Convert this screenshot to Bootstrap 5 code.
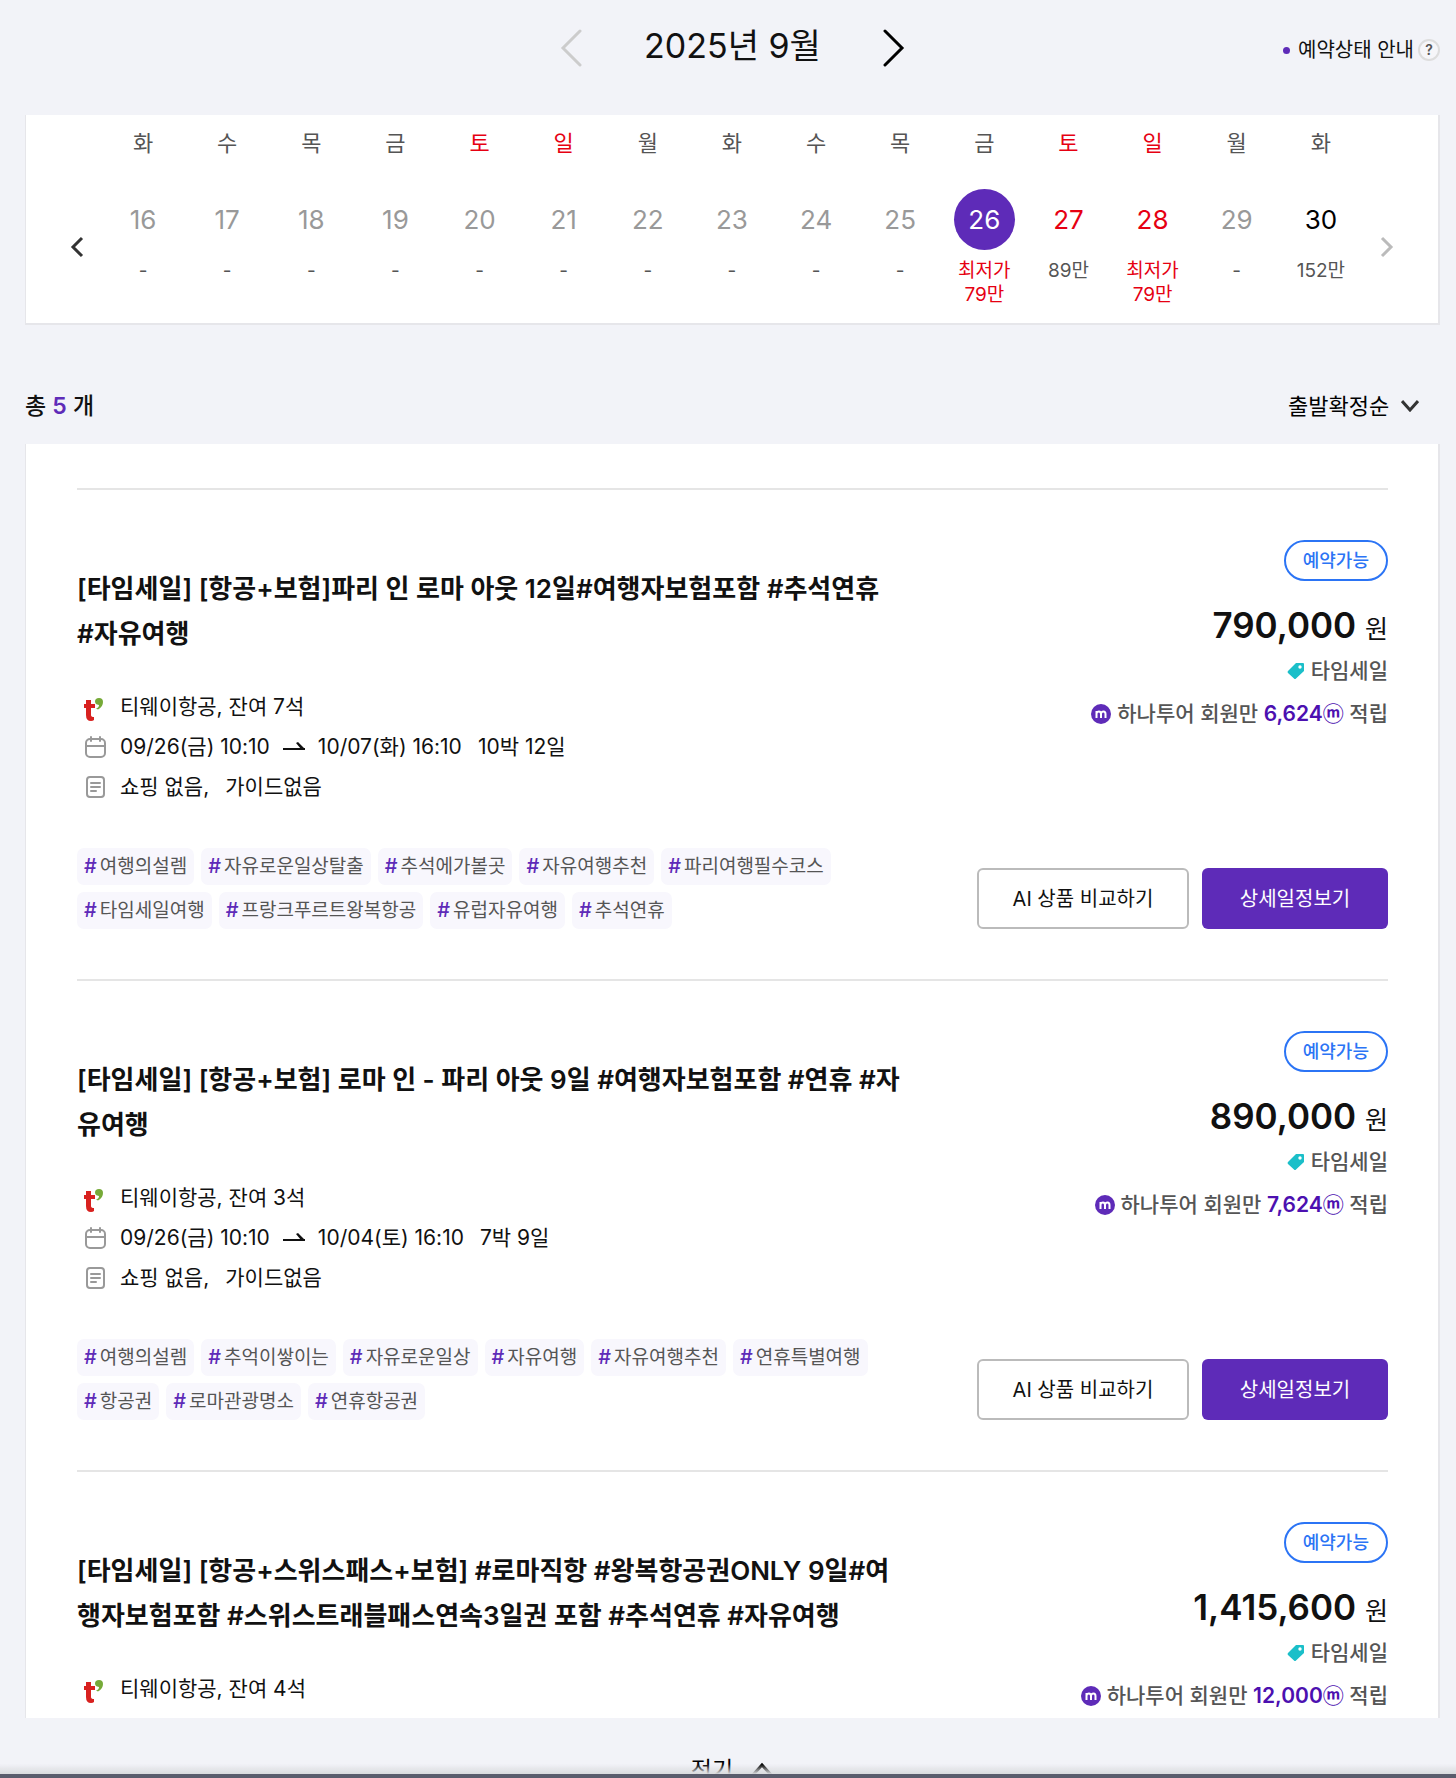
<!DOCTYPE html>
<html lang="ko">
<head>
<meta charset="utf-8">
<meta name="viewport" content="width=device-width, initial-scale=1">
<title>2025년 9월 여행 상품</title>
<link href="https://cdn.jsdelivr.net/npm/bootstrap@5.3.0/dist/css/bootstrap.min.css" rel="stylesheet">
<style>
  :root { --brand: #5e2bb8; --ink: #111; --muted: #555; --soft: #999; --sale: #e60012; --rule: #e5e5e5; }
  body { background: #f2f3f8; color: var(--ink); font-family: Inter, "Noto Sans CJK KR", sans-serif; font-size: 21px; line-height: 40px; height: 100vh; overflow: hidden; }
  .page-wrap { padding: 0 16px 0 25px; }
  .icon-btn { background: none; border: 0; padding: 0; line-height: 0; color: inherit; }
  .month-bar { height: 115px; padding-bottom: 19px; }
  .month-side { flex: 1 1 0; }
  .month-title { font-size: 34px; font-weight: 400; line-height: 48px; margin: 0 62px; padding-bottom: 4px; }
  .status-note { font-size: 20px; line-height: 24px; padding-top: 4px; }
  .dot { width: 7px; height: 7px; border-radius: 50%; background: var(--brand); }
  .help-btn { width: 22px; height: 22px; border: 2px solid #ddd; border-radius: 50%; background: #f6f6f9; color: var(--muted); font-size: 14px; font-weight: 600; line-height: 18px; padding: 0; }
  .panel { background: #fff; border: solid #e6e6ea; border-width: 0 2px 0 1px; }
  .cal { border-bottom-width: 2px; padding: 12px 44px 14px; }
  .cal table { table-layout: fixed; width: 100%; margin: 0; text-align: center; }
  .cal th { font-weight: 400; font-size: 22px; line-height: 32px; padding: 0; color: var(--muted); }
  .cal td { padding: 30px 0 0; vertical-align: top; height: 150px; font-size: 19px; line-height: 24px; color: var(--muted); }
  .day-num { display: block; width: 61px; height: 61px; margin: 0 auto 9px; border: 0; border-radius: 50%; background: none; padding: 0; font-size: 26px; line-height: 61px; color: var(--soft); }
  .cal .hot, .cal .hot .day-num, .cal .rest .day-num { color: var(--sale); }
  .cal .open .day-num { color: #000; }
  .cal .picked .day-num { background: var(--brand); color: #fff; }
  .cal-arrow { flex: 0 0 31px; padding-top: 58px; }
  .list-head { height: 119px; padding: 62px 21px 0 0; }
  .total { font-size: 23px; font-weight: 500; line-height: 38px; margin: 0; }
  .total b { color: var(--brand); font-weight: 600; }
  .sort-box { appearance: none; border: 0; background: transparent; font: inherit; font-size: 22px; line-height: 38px; padding: 0; color: #000; width: 102px; }
  .sort-label { gap: 11px; }
  .results { padding: 44px 50px 0 51px; max-height: 1274px; overflow: hidden; }
  .trip { border-top: 2px solid var(--rule); padding: 50px 0; gap: 60px; min-height: 490px; }
  .trip-main { flex: 0 1 835px; padding-top: 26px; }
  .trip-title { font-size: 26px; font-weight: 600; line-height: 45px; margin: 0 0 31px; min-height: 90px; word-break: break-all; }
  .info { margin: 0 0 41px; }
  .info li { display: flex; align-items: center; height: 40px; }
  .info .lead-icon { width: 22px; height: 28px; margin: 0 14px 0 7px; }
  .tag { background: #f8f7fd; color: var(--muted); border-radius: 7px; font-size: 19px; line-height: 37px; padding: 0 7px; text-decoration: none; }
  .tag b { color: var(--brand); font-size: 20px; font-weight: 500; margin-right: 3px; }
  .tags { gap: 7px; }
  .trip-side { flex: 0 0 auto; }
  .state { border: 2px solid #2b74f5; border-radius: 21px; color: #2b74f5; font-size: 18px; font-weight: 500; line-height: 37px; padding: 0 17px; }
  .price { font-size: 35px; font-weight: 600; line-height: 50px; height: 49px; margin-top: 19px; }
  .price small { font-size: 25px; font-weight: 400; }
  .perk { font-size: 21px; line-height: 43px; font-weight: 500; color: var(--muted); gap: 6px; }
  .perk b { color: #4c10b0; font-weight: 600; }
  .side-actions { gap: 13px; }
  .btn-trip { height: 61px; font-size: 20px; border-radius: 6px; padding: 0; }
  .btn-compare { width: 212px; border: 2px solid #bbb; background: #fff; color: var(--ink); }
  .btn-detail { width: 186px; background: var(--brand); color: #fff; }
  .fold { height: 100px; padding-top: 32px; font-size: 23px; line-height: 40px; gap: 17px; background: none; border: 0; color: #000; }
  .edge { height: 14px; background: linear-gradient(#f2f3f800, #d9dadd 10px, #5a5c6c 10px); }
</style>
</head>
<body>
<svg class="d-none" aria-hidden="true">
  <symbol id="tway" viewBox="0 0 22 28"><path d="M2 7h5v4h4v4H7v7q0 2 3 2v3q-1 1-3 1-5 0-5-6v-7H0v-4h2z" fill="#d8211f"/><path d="M12 15.500q3-1 3-3.500-4-.5-4-3.500 0-3.500 4-3.500t4 4q0 5-5 7.500z" fill="#76aa38"/></symbol>
  <symbol id="cal" viewBox="0 0 22 24"><g fill="none" stroke="#999" stroke-width="2" stroke-linecap="round"><rect x="2" y="4" width="19" height="18" rx="4"/><path d="M2 11h19M7 2v4M16 2v4"/></g></symbol>
  <symbol id="doc" viewBox="0 0 22 24"><g fill="none" stroke="#999" stroke-width="2" stroke-linecap="round"><rect x="3" y="2" width="17" height="20" rx="3"/><path d="M7 8h9M7 12h9M7 16h5"/></g></symbol>
  <symbol id="arrow" viewBox="0 0 24 16"><path d="M1 9h22v2H1zM14 4l2-1 7 7h-4z" fill="#111"/></symbol>
  <symbol id="tag" viewBox="0 0 18 18"><path d="M9 1H16q1 0 1 1v7L9 16.500q-1 1-2 0L1 11q-1-1 0-2z" fill="#1bbfc9"/><circle cx="13" cy="5" r="1.700" fill="#fff"/></symbol>
  <symbol id="mile" viewBox="0 0 20 20"><circle cx="10" cy="10" r="10" fill="#5e2bb8"/><path d="M5.500 14V7M5.500 9.500Q6 7.500 8 7.500t2 2.500v4M10 9.500q.5-2 2.500-2t2 2.500v4" fill="none" stroke="#fff" stroke-width="2"/></symbol>
</svg>
<main class="page-wrap">
  <header class="month-bar d-flex align-items-center">
    <div class="month-side"></div>
    <button class="icon-btn" aria-label="이전 달"><svg width="22" height="38" viewBox="0 0 22 38" fill="none" stroke="#ccc" stroke-width="3" stroke-linecap="round"><path d="M20 2 3 19l17 17"/></svg></button>
    <h1 class="month-title">2025년 9월</h1>
    <button class="icon-btn" aria-label="다음 달"><svg width="22" height="38" viewBox="0 0 22 38" fill="none" stroke="#000" stroke-width="3" stroke-linecap="round"><path d="m2 2 17 17L2 36"/></svg></button>
    <div class="month-side status-note d-flex justify-content-end align-items-center"><span class="dot me-2"></span>예약상태 안내<button class="help-btn ms-1" aria-label="도움말">?</button></div>
  </header>

  <section class="panel cal d-flex align-items-center">
    <button class="icon-btn cal-arrow text-start" aria-label="이전 날짜"><svg width="14" height="22" viewBox="0 0 14 22" fill="none" stroke="#333" stroke-width="3"><path d="m12 2-9 9 9 9"/></svg></button>
    <table>
      <thead><tr id="week"></tr></thead>
      <tbody><tr id="days"></tr></tbody>
    </table>
    <button class="icon-btn cal-arrow text-end" aria-label="다음 날짜"><svg width="14" height="22" viewBox="0 0 14 22" fill="none" stroke="#bbb" stroke-width="3"><path d="m2 2 9 9-9 9"/></svg></button>
  </section>

  <div class="list-head d-flex justify-content-between align-items-start">
    <h2 class="total">총 <b>5</b> 개</h2>
    <label class="sort-label d-flex align-items-center"><select class="sort-box" aria-label="정렬"><option>출발확정순</option></select><svg width="18" height="12" viewBox="0 0 18 12" fill="none" stroke="#333" stroke-width="3"><path d="m1 1 8 9 8-9"/></svg></label>
  </div>

  <section class="panel results" id="results"></section>
  <button class="fold w-100 d-flex justify-content-center align-items-start">전기<svg class="mt-2" width="24" height="22" viewBox="0 0 24 22" fill="none" stroke="#000" stroke-width="3"><path d="m2 18 10-11 10 11"/></svg></button>
</main>
<div class="edge fixed-bottom"></div>

<script>
  const names = ['일', '월', '화', '수', '목', '금', '토'];
  const fares = { 26: '최저가<br>79만', 27: '89만', 28: '최저가<br>79만', 30: '152만' };
  const kinds = { 26: 'picked', 27: 'rest', 28: 'rest', 30: 'open' };
  let week = '', days = '';
  for (let d = 16; d <= 30; d++) {
    const w = (d - 14) % 7;
    const low = d === 26 || d === 28;
    week += `<th scope="col" class="${w === 0 || w === 6 ? 'hot' : ''}">${names[w]}</th>`;
    days += `<td class="${kinds[d] || ''}"><button class="day-num">${d}</button><span class="${low ? 'hot' : ''}">${fares[d] || '-'}</span></td>`;
  }
  document.getElementById('week').innerHTML = week;
  document.getElementById('days').innerHTML = days;

  const trips = [
    { title: '[타임세일] [항공+보험]파리 인 로마 아웃 12일#여행자보험포함 #추석연휴<br>#자유여행', seats: 7, back: '10/07(화) 16:10', stay: '10박 12일', price: '790,000', miles: '6,624',
      tags: [['여행의설렘', '자유로운일상탈출', '추석에가볼곳', '자유여행추천', '파리여행필수코스'], ['타임세일여행', '프랑크푸르트왕복항공', '유럽자유여행', '추석연휴']] },
    { title: '[타임세일] [항공+보험] 로마 인 - 파리 아웃 9일 #여행자보험포함 #연휴 #자<br>유여행', seats: 3, back: '10/04(토) 16:10', stay: '7박 9일', price: '890,000', miles: '7,624',
      tags: [['여행의설렘', '추억이쌓이는', '자유로운일상', '자유여행', '자유여행추천', '연휴특별여행'], ['항공권', '로마관광명소', '연휴항공권']] },
    { title: '[타임세일] [항공+스위스패스+보험] #로마직항 #왕복항공권ONLY 9일#여<br>행자보험포함 #스위스트래블패스연속3일권 포함 #추석연휴 #자유여행', seats: 4, price: '1,415,600', miles: '12,000', tags: [] }
  ];
  document.getElementById('results').innerHTML = trips.map(t => `
    <article class="trip d-flex justify-content-between">
      <div class="trip-main">
        <h3 class="trip-title">${t.title}</h3>
        <ul class="info list-unstyled">
          <li><svg class="lead-icon"><use href="#tway"/></svg>티웨이항공, 잔여 ${t.seats}석</li>
          ${t.back ? `<li><svg class="lead-icon"><use href="#cal"/></svg>09/26(금) 10:10<svg class="mx-2" width="32" height="16"><use href="#arrow"/></svg>${t.back}<span class="ms-3">${t.stay}</span></li>
          <li><svg class="lead-icon"><use href="#doc"/></svg>쇼핑 없음,<span class="ms-3">가이드없음</span></li>` : ''}
        </ul>
        <div class="tags d-flex flex-column">${t.tags.map(r => `<div class="tags d-flex">${r.map(x => `<a href="#" class="tag text-nowrap"><b>#</b>${x}</a>`).join('')}</div>`).join('')}</div>
      </div>
      <div class="trip-side d-flex flex-column align-items-end">
        <span class="state">예약가능</span>
        <div class="price">${t.price} <small>원</small></div>
        <div class="perk d-flex align-items-center"><svg width="18" height="18"><use href="#tag"/></svg>타임세일</div>
        <div class="perk d-flex align-items-center"><svg width="20" height="20"><use href="#mile"/></svg><span>하나투어 회원만 <b>${t.miles}ⓜ</b> 적립</span></div>
        ${t.back ? '<div class="side-actions d-flex mt-auto"><button class="btn btn-trip btn-compare">AI 상품 비교하기</button><button class="btn btn-trip btn-detail">상세일정보기</button></div>' : ''}
      </div>
    </article>`).join('');
</script>
<script src="https://cdn.jsdelivr.net/npm/bootstrap@5.3.0/dist/js/bootstrap.bundle.min.js"></script>
</body>
</html>
